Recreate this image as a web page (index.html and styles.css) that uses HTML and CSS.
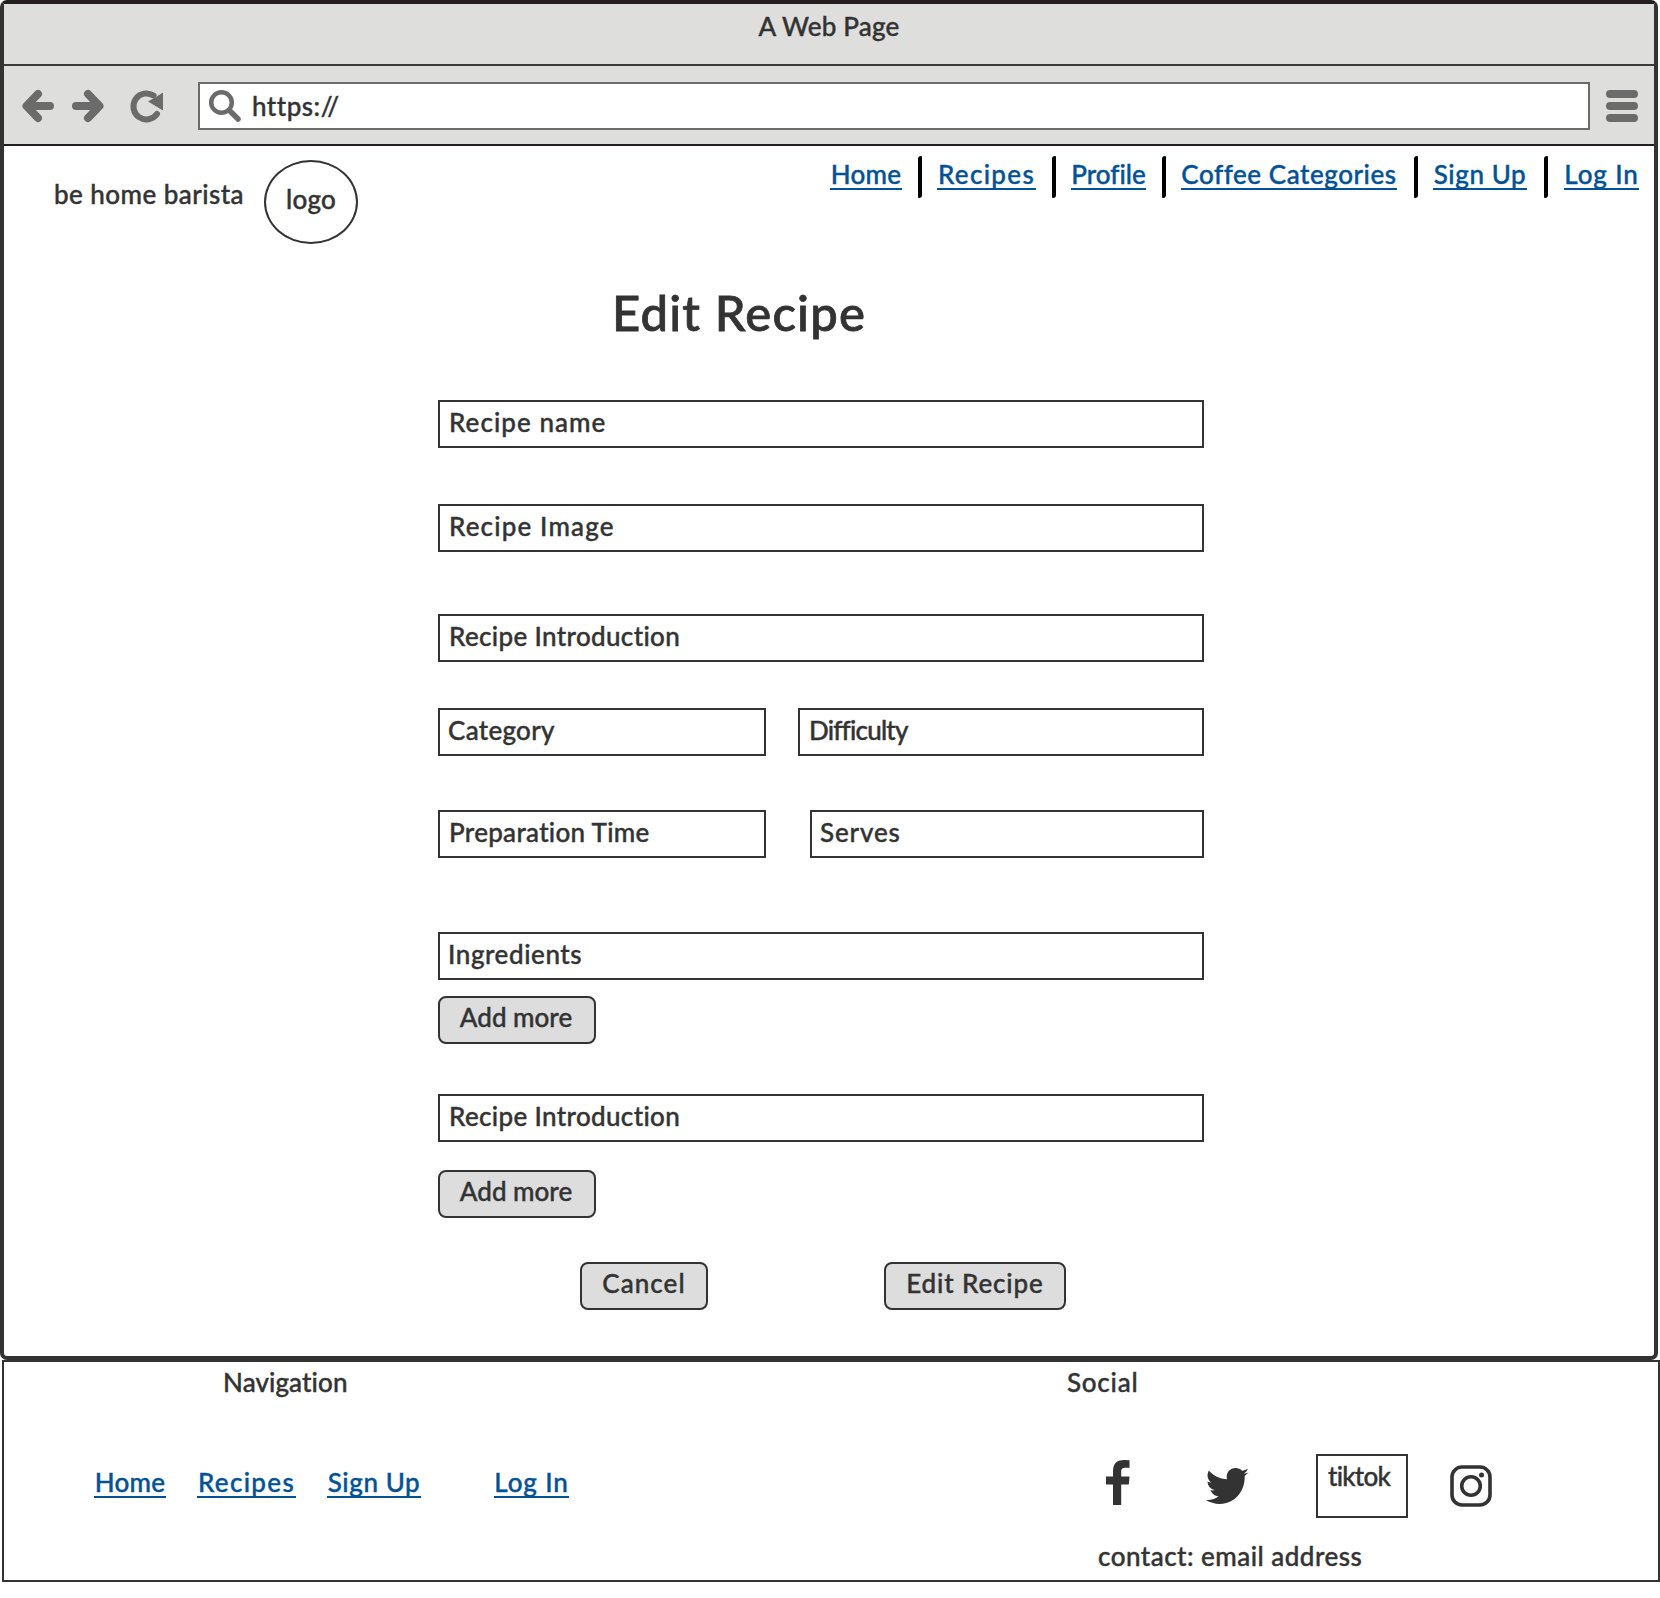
FILE: index.html
```html
<!DOCTYPE html>
<html lang="en">
<head>
<meta charset="utf-8">
<title>Edit Recipe</title>
<link rel="stylesheet" href="styles.css">
</head>
<body>
<div class="window">
  <div class="titlebar"><span class="window-title">A Web Page</span></div>
  <div class="toolbar">
    <svg class="icon back" viewBox="0 0 32 32"><path d="M28 16H8M16 4L4.500 16L16 28" /></svg>
    <svg class="icon forward" viewBox="0 0 32 32"><path d="M4 16H24M16 4L27.500 16L16 28" /></svg>
    <svg class="icon reload" viewBox="0 0 32 32"><path class="ring" d="M26 24A13 13 0 1 1 22.500 5.500" /><path class="tip" d="M32 2.500V20.500L17 11.500L25 7Z" /></svg>
    <div class="url">
      <svg class="icon" viewBox="0 0 32 32"><circle class="lens" cx="12.500" cy="12.500" r="10.300" /><path class="handle" d="M20.500 20.500L29 29" /></svg>
      <span class="url-text">https://</span>
    </div>
    <svg class="icon menu" viewBox="0 0 32 32"><path d="M4 4H28M4 16H28M4 28H28" /></svg>
  </div>
  <div class="page">
    <header class="header">
      <span class="brand">be home barista</span>
      <span class="logo">logo</span>
      <nav class="nav">
        <a class="link home">Home</a><i class="bar"></i>
        <a class="link recipes">Recipes</a><i class="bar"></i>
        <a class="link profile">Profile</a><i class="bar"></i>
        <a class="link categories">Coffee Categories</a><i class="bar"></i>
        <a class="link signup">Sign Up</a><i class="bar"></i>
        <a class="link login">Log In</a>
      </nav>
    </header>
    <h1 class="heading">Edit Recipe</h1>
    <form class="form">
      <div class="field name">Recipe name</div>
      <div class="field image">Recipe Image</div>
      <div class="field intro">Recipe Introduction</div>
      <div class="row row-category"><div class="field category">Category</div><div class="field difficulty">Difficulty</div></div>
      <div class="row row-time"><div class="field time">Preparation Time</div><div class="field serves">Serves</div></div>
      <div class="field ingredients">Ingredients</div>
      <div class="button add">Add more</div>
      <div class="field steps">Recipe Introduction</div>
      <div class="button add add-step">Add more</div>
      <div class="actions"><div class="button cancel">Cancel</div><div class="button submit">Edit Recipe</div></div>
    </form>
  </div>
</div>
<footer class="footer">
  <section class="foot-nav">
    <h2 class="foot-title nav-title">Navigation</h2>
    <div class="foot-links">
      <a class="link home">Home</a><a class="link recipes">Recipes</a><a class="link signup">Sign Up</a><a class="link login">Log In</a>
    </div>
  </section>
  <section class="social">
    <h2 class="foot-title social-title">Social</h2>
    <div class="social-row">
      <svg class="facebook" viewBox="0 0 24 45"><path d="M23.500 .3V7.800H19Q15.200 7.800 15.200 11.200V16.500H23.500L22.800 24.500H15.200V45H7V24.500H0V16.500H7V11Q7 0 18 0Z" /></svg>
      <svg class="twitter" viewBox="0 0 42 35"><path d="M41.500 4.200L37.800 7.800V9C37.800 22 29 35 13.500 35C8.500 35 3.800 33.600 0 31.200C4.800 31.600 9.200 30.200 12.500 27.600C8.700 27.500 5.600 25 4.500 21.700C5.900 21.900 7.200 21.900 8.400 21.500C4.400 20.700 1.500 17.200 1.500 13.200C2.700 13.900 4 14.200 5.400 14.300C1.500 11.600 .4 6.700 2.800 2.300C7.200 7.600 13.500 10.500 20.500 10.900C19 4.500 23.600 0 29 0C31.500 0 33.700 1 35.300 2.700C37.300 2.300 39.100 1.600 40.800 .6C40.200 2.600 38.900 4.200 37 5.300C38.700 5.100 40.200 4.700 41.500 4.200Z" /></svg>
      <div class="tiktok">tiktok</div>
      <svg class="instagram" viewBox="0 0 42 42"><rect x="2" y="2" width="38" height="38" rx="10" /><circle cx="21" cy="21" r="9.300" /><circle class="dot" cx="31.500" cy="10" r="2.500" /></svg>
    </div>
    <div class="contact">contact: email address</div>
  </section>
</footer>
</body>
</html>
```
FILE: styles.css
```css
* { box-sizing: border-box; }
body { margin: 0; background: #fff; color: #333; font: 500 26px/28px Lato, sans-serif; font-variant-ligatures: none; white-space: nowrap; -webkit-text-stroke: 0.4px currentColor; }
svg { display: block; flex: none; overflow: visible; }

.window { width: 1658px; height: 1360px; border: 4px solid #333; border-top-color: #231f20; border-radius: 7px; display: flex; flex-direction: column; }
.titlebar { height: 62px; background: #dededc; border-bottom: 2px solid #3c3a3b; text-align: center; padding-top: 8px; letter-spacing: 0.2px; }
.toolbar { height: 80px; background: #dededc; border-bottom: 2px solid #231f20; display: flex; align-items: center; padding: 2px 0 0 18px; }
.icon { width: 32px; height: 32px; fill: none; stroke: #6b6b6b; stroke-width: 8px; stroke-linecap: round; stroke-linejoin: round; }
.forward { margin-left: 18px; }
.reload { margin-left: 27px; }
.ring { stroke-width: 6px; }
.tip { fill: #6b6b6b; stroke: none; }
.url { width: 1392px; height: 48px; margin-left: 35px; border: 2px solid #6b6b6b; background: #fff; display: flex; align-items: center; padding-left: 9px; }
.lens { stroke-width: 4.500px; }
.handle { stroke-width: 5.500px; }
.url-text { margin-left: 11px; letter-spacing: 0.5px; }
.menu { margin-left: 16px; }

.header { display: flex; height: 116px; }
.brand { margin: 34px 0 0 50px; width: 190px; letter-spacing: 0.45px; }
.logo { width: 94px; height: 84px; margin: 14px 0 0 20px; border: 2px solid #333; border-radius: 50%; text-align: center; line-height: 75px; letter-spacing: 0.2px; }
.nav { display: flex; margin: 10px 0 0 472px; }
.link { display: block; height: 30px; color: #045296; border-bottom: 2px solid #045296; text-align: center; }
.nav .link { margin-top: 4px; }
.bar { width: 4px; height: 42px; margin: 0 15px 0 16px; background: #000; border-radius: 3px 1px 3px 1px; }
.home { width: 72px; letter-spacing: 0.3px; }
.recipes { width: 99px; letter-spacing: 1.35px; }
.profile { width: 75px; }
.categories { width: 216px; margin-right: 1px; letter-spacing: 0.55px; }
.signup { width: 94px; margin-right: 1px; letter-spacing: 0.6px; }
.login { width: 75px; margin-left: 1px; letter-spacing: 0.9px; }

.heading { margin: 20px 0 0 608px; font-size: 49px; line-height: 60px; font-weight: 500; letter-spacing: 1.2px; -webkit-text-stroke-width: 0.8px; }
.form { width: 766px; margin: 58px 0 0 434px; }
.field { height: 48px; border: 2px solid #333; padding: 6px 0 0 9px; }
.name { letter-spacing: 1.05px; }
.image { margin-top: 56px; letter-spacing: 1.15px; }
.intro { margin-top: 62px; }
.intro, .steps { letter-spacing: 0.35px; }
.row { display: flex; justify-content: space-between; }
.row-category { margin-top: 46px; }
.row-time { margin-top: 54px; }
.category, .time { width: 328px; letter-spacing: 0.3px; }
.category { padding-left: 8px; }
.difficulty { width: 406px; letter-spacing: -0.8px; }
.serves { width: 394px; padding-left: 8px; letter-spacing: 0.85px; }
.ingredients { margin-top: 74px; padding-left: 8px; letter-spacing: 0.57px; }
.button { height: 48px; border: 2px solid #333; border-radius: 8px; background: #ddd; text-align: center; padding-top: 5px; }
.add { width: 158px; margin-top: 16px; padding-right: 2px; }
.steps { margin-top: 50px; }
.add-step { margin-top: 28px; }
.actions { display: flex; gap: 176px; margin: 44px 0 0 142px; }
.cancel { width: 128px; letter-spacing: 1.05px; }
.submit { width: 182px; letter-spacing: 0.87px; }

.footer { width: 1658px; height: 222px; margin-left: 2px; border: 2px solid #333; display: flex; }
.foot-nav { width: 1062px; }
.foot-title { margin: 6px 0 0; font-size: 26px; font-weight: 500; }
.nav-title { padding-left: 219px; letter-spacing: 0.1px; }
.social-title { padding-left: 1px; letter-spacing: 0.75px; }
.foot-links { display: flex; padding: 72px 0 0 90px; }
.foot-links .recipes { margin-left: 31px; }
.foot-links .signup { margin-left: 31px; }
.foot-links .login { margin-left: 72px; }
.social-row { display: flex; height: 64px; margin: 58px 0 0 40px; }
.facebook { width: 24px; height: 45px; margin-top: 6px; fill: #333; }
.twitter { width: 43px; height: 36px; margin: 14px 0 0 76px; fill: #333; }
.tiktok { width: 92px; height: 64px; margin-left: 67px; border: 2px solid #333; padding: 6px 0 0 10px; letter-spacing: -0.75px; }
.instagram { width: 42px; height: 42px; margin: 11px 0 0 42px; fill: none; stroke: #333; stroke-width: 3.600px; }
.dot { fill: #333; stroke: none; }
.contact { margin: 24px 0 0 32px; letter-spacing: 0.48px; }
```
